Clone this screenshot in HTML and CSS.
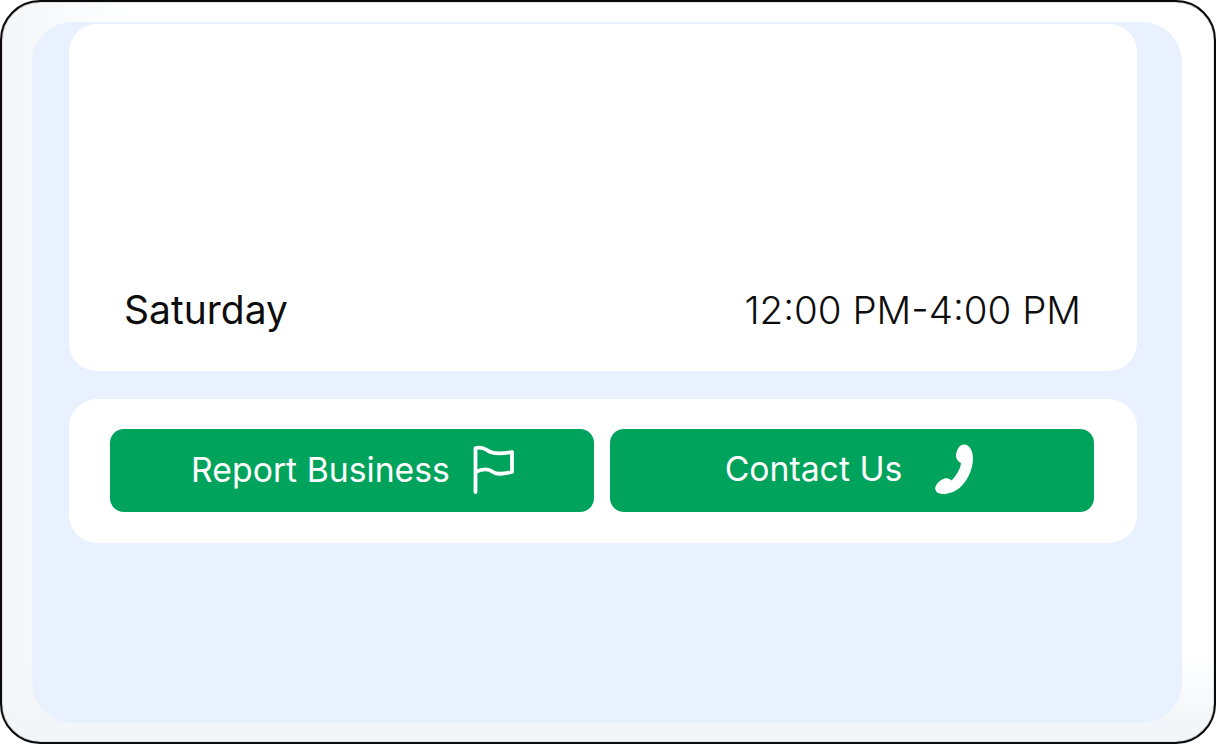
FILE: index.html
```html
<!DOCTYPE html>
<html lang="en">
<head>
<meta charset="utf-8">
<title>Business hours</title>
<link rel="stylesheet" href="styles.css">
</head>
<body>
<div class="frame">
  <main class="panel">
    <section class="card hours">
      <div class="row">
        <span class="day">Saturday</span>
        <span class="time">12:00 PM-4:00 PM</span>
      </div>
    </section>
    <section class="card actions">
      <a class="btn btn-report">
        <span>Report Business</span>
        <svg class="icon-flag" viewBox="0 0 42 50" width="42" height="50" fill="none" stroke="#fff" stroke-width="3.8" stroke-linecap="round" stroke-linejoin="round">
          <path d="M2.500 47V3C7 2 11 3 14 5C18 8.500 25 9.500 39 7V27C30 29 24 30 20 27C15 23 9 24 2.500 27"/>
        </svg>
      </a>
      <a class="btn btn-contact">
        <span>Contact Us</span>
        <svg class="icon-phone" viewBox="0 0 38 50" width="38" height="50" fill="#fff">
          <path d="M24 3C26 .5 30 -.3 32.500 1.500C36.500 4 38.500 10 37.800 17.500C37 27 32 37 25 43.500C19 49 10 51 4.500 49.500C.5 48.500-.8 44.500 1 41.500C2.500 38.500 6 35.500 9.500 34.500C12 33.800 14.500 34.500 16.500 36.500C21 32 25.500 25 26 19C23.500 18 21 15 21 11.500C21 8.500 22.500 5 24 3Z"/>
        </svg>
      </a>
    </section>
  </main>
</div>
</body>
</html>
```
FILE: styles.css
```css
* { box-sizing: border-box; }
html, body { margin: 0; height: 100%; background: #fff; }
body { font-family: Inter, "Liberation Sans", sans-serif; overflow: hidden; }

.frame {
  width: 1216px;
  height: 744px;
  border: 2px solid #0a0a0a;
  border-radius: 40px;
  padding: 20px 32px 19px 30px;
  box-shadow: inset 0 0 1px #0a0a0a;
  background:
    linear-gradient(to top, #f3f6f8 0, #f3f6f8 18px, rgba(243, 246, 248, 0) 90px),
    linear-gradient(to right, #f3f6f8 0, rgba(243, 246, 248, 0) 135px),
    #fff;
}

.panel {
  height: 100%;
  background: #e9f1ff;
  border-radius: 40px;
  padding: 2px 45px 0 37px;
  display: flex;
  flex-direction: column;
  gap: 28px;
}

.card { background: #fff; border-radius: 28px; }

.hours {
  height: 347px;
  display: flex;
  flex-direction: column;
  justify-content: flex-end;
  padding: 0 56px 39px 55px;
}

.row {
  display: flex;
  justify-content: space-between;
  align-items: center;
  color: #0d0d0d;
  line-height: 44px;
}

.day { font-size: 39px; }
.time { font-size: 38.5px; font-weight: 300; }

.actions {
  height: 144px;
  padding: 30px 43px 31px 41px;
  display: grid;
  grid-template-columns: 1fr 1fr;
  gap: 16px;
}

.btn {
  display: flex;
  align-items: center;
  justify-content: center;
  background: #00a35c;
  border-radius: 14px;
  color: #fff;
  font-size: 33.75px;
}

.btn-report { gap: 23px; padding: 0 0 2px 2px; }
.btn-contact { gap: 33px; padding: 0 6px 4px 0; }
.icon-flag, .icon-phone { flex: none; }
```
